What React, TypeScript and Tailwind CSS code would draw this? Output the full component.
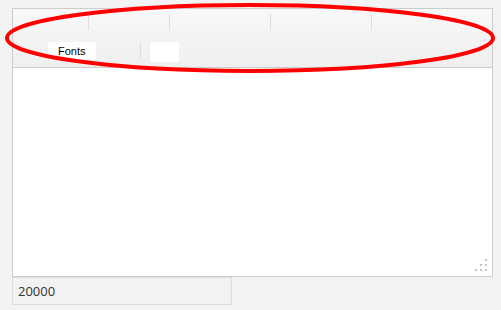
export default function App() {
  return (
    <div className="relative w-[501px] h-[310px] bg-[#f3f3f3] pt-[8px] pl-[12px] font-['Liberation_Sans',Arial,sans-serif]">
      <div className="w-[481px] border border-[#cccccc] bg-white">
        {/* toolbar */}
        <div className="h-[59px] border-b border-[#cccccc] bg-gradient-to-b from-[#f8f8f8] to-[#efefef]">
          <div className="flex h-[33px] pt-[5px] pl-[75px]">
            <div className="w-px h-[16px] bg-[#dddddd]" />
            <div className="w-px h-[16px] bg-[#dddddd] ml-[80px]" />
            <div className="w-px h-[16px] bg-[#dddddd] ml-[100px]" />
            <div className="w-px h-[16px] bg-[#dddddd] ml-[100px]" />
          </div>
          <div className="flex items-start pl-[35px]">
            <div className="w-[48px] h-[18px] bg-white rounded-[2px] text-[11px] leading-[18px] text-black pl-[10px]">
              Fonts
            </div>
            <div className="w-px h-[16px] bg-[#dddddd] ml-[44px]" />
            <div className="w-[29px] h-[20px] bg-white rounded-[2px] ml-[9px]" />
          </div>
        </div>
        {/* editing area */}
        <div className="relative h-[208px] bg-white">
          <svg className="absolute right-[5px] bottom-[5px]" width="12" height="12" viewBox="0 0 12 12">
            <rect x="10" y="0" width="2" height="2" fill="#c4c4c4" />
            <rect x="5" y="5" width="2" height="2" fill="#c4c4c4" />
            <rect x="10" y="5" width="2" height="2" fill="#c4c4c4" />
            <rect x="0" y="10" width="2" height="2" fill="#c4c4c4" />
            <rect x="5" y="10" width="2" height="2" fill="#c4c4c4" />
            <rect x="10" y="10" width="2" height="2" fill="#c4c4c4" />
          </svg>
        </div>
      </div>
      <div className="w-[220px] h-[28px] border border-[#dddddd] bg-[#f2f2f2] pl-[5px] text-[13px] leading-[26px] text-[#333333] font-['Open_Sans',sans-serif]">
        20000
      </div>
      <svg className="absolute left-0 top-0 pointer-events-none" width="501" height="310">
        <ellipse cx="250" cy="38" rx="243" ry="33" fill="none" stroke="#ff0000" strokeWidth="4" />
      </svg>
    </div>
  );
}
